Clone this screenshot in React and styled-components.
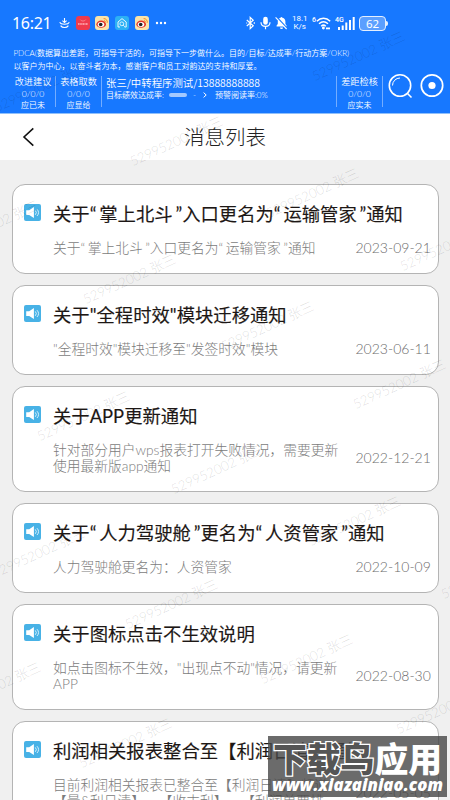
import React from "react";
import styled, { createGlobalStyle } from "styled-components";

const GlobalStyle = createGlobalStyle`
    * {
        box-sizing: border-box;
    }

    html, body {
        margin: 0;
        overflow: hidden;
    }

    body {
        font-family: Lato, "Noto Sans CJK SC", sans-serif;
        text-spacing-trim: space-all;
    }
`

const Screen = styled.main`
    position: relative;
    width: 450px;
    height: 800px;
    overflow: hidden;
    background: #f0f0f0;
`

const Header = styled.header`
    height: 114px;
    padding-top: 11px;
    background: #1778ff;
    border-bottom: 1px solid #8fc0fb;
    color: #fff;
`

const StatusBar = styled.div`
    display: flex;
    justify-content: space-between;
    align-items: center;
    height: 24px;
    padding: 0 64px 0 12px;
`

const StatusGroup = styled.div`
    display: flex;
    align-items: center;
    gap: ${({ $gap }) => $gap}px;
`

const Clock = styled.span`
    width: 41px;
    font-family: "Noto Sans", sans-serif;
    font-size: 16px;
    letter-spacing: -0.3px;
    line-height: 24px;
    white-space: nowrap;
`

const Speed = styled.span`
    width: 16px;
    font-family: Roboto, sans-serif;
    font-size: 8px;
    line-height: 8.5px;
    text-align: center;
    white-space: nowrap;
`

const Battery = styled.span`
    position: relative;
    width: 27px;
    height: 15px;
    border: 1px solid #e4efff;
    border-radius: 4px;
    background: #5b9fff;
    font-family: "Noto Sans", sans-serif;
    font-size: 11.5px;
    line-height: 13px;
    text-align: center;

    &::after {
        content: "";
        position: absolute;
        top: 4px;
        right: -3px;
        width: 2px;
        height: 5px;
        border-radius: 0 2px 2px 0;
        background: #e4efff;
    }
`

const Slogan = styled.div`
    padding: 12px 0 0 13.5px;
    font-size: 8px;
    font-weight: 350;
    line-height: 13.3px;
    white-space: nowrap;
`

const Summary = styled.div`
    display: flex;
    height: 33px;
    margin-top: 2px;
    padding-left: 11px;
`

const Counter = styled.div`
    display: flex;
    flex-direction: column;
    align-items: center;
    width: ${({ $width }) => $width}px;
    height: 31px;
    border-right: 1px solid #74adff;
    border-left: ${({ $bordered }) => ($bordered ? "1px solid #74adff" : "none")};
    font-size: 8px;
    font-weight: 350;
    line-height: 9px;
    white-space: nowrap;
`

const CounterName = styled.span`
    font-size: 9.2px;
    line-height: 12px;
`

const CounterValue = styled.span`
    font-size: 8.6px;
    line-height: 13px;
`

const User = styled.div`
    width: 234px;
    padding-left: 4px;
    white-space: nowrap;
`

const UserName = styled.div`
    font-family: "Noto Sans CJK SC", sans-serif;
    font-size: 10.4px;
    font-weight: 350;
    line-height: 13px;
`

const Rates = styled.div`
    display: flex;
    align-items: center;
    font-size: 8px;
    font-weight: 350;
    line-height: 13px;
`

const Masked = styled.span`
    width: 18px;
    height: 4px;
    margin: 0 6px 0 5px;
    border-radius: 2px;
    background: #a3c9ff;
`

const Arrow = styled.svg`
    margin: 0 8px 0 7px;
`

const Tools = styled.div`
    display: flex;
    gap: 7px;
    margin-top: -3px;
    padding-left: 5px;
`

const TitleBar = styled.div`
    display: grid;
    grid-template-columns: 60px 1fr 60px;
    align-items: center;
    height: 46px;
    background: #fff;
`

const Back = styled.svg`
    margin-left: 22px;
`

const PageTitle = styled.h1`
    margin: 0;
    padding-top: 1px;
    font-size: 20.5px;
    font-weight: 300;
    line-height: 45px;
    text-align: center;
    color: #222;
`

const List = styled.section`
    display: flex;
    flex-direction: column;
    gap: 11px;
    padding: 24px 11.5px 0;
`

const Card = styled.article`
    display: grid;
    grid-template-columns: 40.5px 1fr;
    flex-shrink: 0;
    padding: 16px 7px 17px 0;
    border: 1px solid #b4b4b4;
    border-radius: 13px;
    background: #fff;
`

const Speaker = styled.svg`
    margin: 3px 0 0 11.5px;
`

const CardTitle = styled.h2`
    margin: 0 0 13px;
    font-size: 18.35px;
    font-weight: 400;
    line-height: 26px;
    color: #1d1715;
    -webkit-text-stroke: 0.15px #1d1715;
    white-space: nowrap;
`

const CardBody = styled.div`
    grid-column: 2;
    display: flex;
    justify-content: space-between;
    align-items: center;
    color: #7c7c7c;
`

const Description = styled.p`
    height: ${({ $lines }) => $lines * 16}px;
    margin: 0;
    font-size: 13.75px;
    font-weight: 300;
    line-height: 16px;
    white-space: pre;
`

const DateLabel = styled.time`
    flex-shrink: 0;
    width: 75px;
    font-size: 14px;
    font-weight: 300;
    line-height: 16px;
    color: #6c6c6c;
    white-space: nowrap;
`

const Quote = styled.span`
    display: inline-block;
    width: 0.52em;
    text-align: ${({ $side }) => $side};
`

const Mark = styled.span`
    position: absolute;
    left: ${({ $x }) => $x}px;
    top: ${({ $y }) => $y - 16}px;
    height: 16px;
    font-size: 13.4px;
    font-weight: 300;
    line-height: 16px;
    color: rgba(0, 0, 0, 0.14);
    transform: rotate(-24.5deg);
    transform-origin: 0 100%;
    white-space: nowrap;
    pointer-events: none;
`

const Stamp = styled.aside`
    position: absolute;
    left: 268px;
    top: 736px;
    display: flex;
    flex-direction: column;
    align-items: center;
    width: 179px;
    height: 61px;
    background: rgba(70, 70, 70, 0.8);
    color: #fff;
    white-space: nowrap;
`

const StampName = styled.div`
    height: 38px;
    margin-top: 3px;
    font-size: 33.8px;
    font-weight: 900;
    line-height: 40px;
`

const Outlined = styled.span`
    color: #555;
    paint-order: stroke fill;
    -webkit-text-stroke: 2.6px #fff;
`

const StampUrl = styled.div`
    font-family: "Open Sans", sans-serif;
    font-size: 16.8px;
    font-style: italic;
    font-weight: 800;
    line-height: 16px;
`

const messages = [
    { title: "关于“掌上北斗”入口更名为“运输管家”通知", text: "关于“掌上北斗”入口更名为“运输管家”通知", date: "2023-09-21" },
    { title: "关于\"全程时效\"模块迁移通知", text: "\"全程时效\"模块迁移至\"发签时效\"模块", date: "2023-06-11" },
    { title: "关于APP更新通知", text: "针对部分用户wps报表打开失败情况，需要更新\n使用最新版app通知", date: "2022-12-21" },
    { title: "关于“人力驾驶舱”更名为“人资管家”通知", text: "人力驾驶舱更名为：人资管家", date: "2022-10-09" },
    { title: "关于图标点击不生效说明", text: "如点击图标不生效，\"出现点不动\"情况，请更新\nAPP", date: "2022-08-30" },
    { title: "利润相关报表整合至【利润日清】通知", text: "目前利润相关报表已整合至【利润日清】频道\n【量&利日清】、【收支利】、【利润单票排", date: "2022-05-05" },
];

const marks = [
    [-2, 115], [316, 84], [134, 169], [270, 221], [-50, 253], [87, 307], [404, 274],
    [225, 354], [357, 412], [41, 444], [175, 497], [312, 549], [-4, 581], [129, 632],
    [-48, 715], [445, 602], [264, 687], [400, 737], [83, 771],
];

const withQuotes = (text) =>
    text.split(/([“”])/).map((part, i) => {
        if (part === "“") return <Quote key={i} $side="left">{part}</Quote>;
        if (part === "”") return <Quote key={i} $side="right">{part}</Quote>;
        return part;
    });

const WeiboIcon = () => (
    <svg width="14" height="14" viewBox="0 0 14 14">
        <rect width="14" height="14" rx="3" fill="#fbe3a8" />
        <ellipse cx="6.2" cy="8.2" rx="4.8" ry="3.6" fill="#e0342b" />
        <ellipse cx="6" cy="8.4" rx="3.3" ry="2.5" fill="#fff" />
        <circle cx="5.7" cy="8.5" r="1.8" fill="#222" />
        <path d="M8.6 2.6a3.4 3.4 0 0 1 3.6 4.2M8.9 4.6a1.5 1.5 0 0 1 1.4 1.8" fill="none" stroke="#f08a24" strokeWidth="1" />
    </svg>
);

const SpeakerIcon = () => (
    <Speaker width="17" height="17" viewBox="0 0 17 17">
        <rect width="17" height="17" rx="2" fill="#48b2e6" />
        <path d="M2.2 6.2h3L9.9 3v11L5.2 11h-3z" fill="#fff" />
        <path d="M11.3 6.4a3.2 3.2 0 0 1 0 4.4M13 5.2a5 5 0 0 1 0 6.8" fill="none" stroke="#e2f5ff" strokeWidth="0.9" />
    </Speaker>
);

const StatusIcons = () => (
    <StatusBar>
        <StatusGroup $gap={5.8}>
            <Clock>16:21</Clock>
            <svg width="11" height="12" viewBox="0 0 11 12" fill="none" stroke="#fff" strokeWidth="1.1">
                <path d="M5.5 1v4.4M3.4 3.6l2.1 2 2.1-2M.8 5.2C1.6 8 9.4 8 10.2 5.2M1.6 8.6c1.8 2.6 6 2.6 7.8 0" />
            </svg>
            <svg width="14" height="14" viewBox="0 0 14 14">
                <rect width="14" height="14" rx="3" fill="#ef3b4d" />
                <path d="M4.3 3.6c1 2 4.4 2 5.4 0" fill="none" stroke="#ff9ba4" strokeWidth="0.7" />
                <path d="M2 8.1h10" stroke="#ffb3b8" strokeWidth="1.5" strokeDasharray="1.2 .4" />
            </svg>
            <WeiboIcon />
            <svg width="14" height="14" viewBox="0 0 14 14">
                <rect width="14" height="14" rx="3" fill="#2cb1f4" />
                <path d="M3 11V6l4-3.4L11.2 6v5H9.6M3 11h2" fill="none" stroke="#fff" strokeWidth="0.9" />
                <circle cx="6.8" cy="7.8" r="1.9" fill="none" stroke="#fff" strokeWidth="0.8" />
                <path d="M8.2 9.2l1.6 1.6" stroke="#fff" strokeWidth="0.8" />
            </svg>
            <WeiboIcon />
            <svg width="12" height="4" viewBox="0 0 12 4" fill="#fff">
                <circle cx="2" cy="2" r="1.2" />
                <circle cx="6" cy="2" r="1.2" />
                <circle cx="10" cy="2" r="1.2" />
            </svg>
        </StatusGroup>
        <StatusGroup $gap={4.1}>
            <svg width="9" height="14" viewBox="0 0 9 14" fill="none" stroke="#fff" strokeWidth="1.2">
                <path d="M.8 4l6.4 5.8L4.2 12.6V1.4l3 2.8L.8 10" />
                <path d="M8.3 6.2v1.6M.2 7h1" />
            </svg>
            <svg width="11" height="14" viewBox="0 0 11 14">
                <rect x="3.2" y="0.8" width="4.6" height="8" rx="2.3" fill="#fff" />
                <path d="M1 6.2c0 5.6 9 5.6 9 0M5.5 10.4v2.8" fill="none" stroke="#fff" strokeWidth="1.2" />
            </svg>
            <svg width="13" height="14" viewBox="0 0 13 14">
                <path d="M1.6 10.5V9.4L2.8 8V5.6C3 2.6 4.6 2 5.6 1.7c.2-1 1.6-1 1.8 0C9.6 2.2 10.4 4 10.4 5.8V8l1.2 1.4v1.1z" fill="#fff" />
                <path d="M5 11.4h3a1.5 1.5 0 0 1-3 0z" fill="#fff" />
                <path d="M1.6 1l11 12" stroke="#1778ff" strokeWidth="1.6" />
                <path d="M.6 1.4l11 11.6" stroke="#fff" strokeWidth="1.1" />
            </svg>
            <Speed>18.1<br />K/s</Speed>
            <svg width="19" height="16" viewBox="0 0 19 16" fill="none" stroke="#fff" strokeWidth="1.5">
                <text x="0" y="6.5" fontSize="7" fontFamily="Roboto" fontWeight="500" fill="#fff" stroke="none">6</text>
                <path d="M4.8 6.2c4-3.8 9.4-3.8 13.4 0M7 8.8c2.8-2.6 6.2-2.6 9 0M9.2 11.2c1.4-1.3 3.2-1.3 4.6 0" />
                <circle cx="11.4" cy="13" r="0.7" fill="#fff" />
                <path d="M14 13.4h4" strokeWidth="1.8" />
            </svg>
            <svg width="20" height="15" viewBox="0 0 20 15" fill="#fff">
                <text x="0" y="6.4" fontSize="7" fontFamily="Roboto" fontWeight="500">4G</text>
                <path d="M3 11h2v3H3zM6.7 9.5h2V14h-2zM10.3 6.5h2V14h-2zM14 4h2v10h-2zM17.7 1h2v13h-2z" />
            </svg>
            <Battery>62</Battery>
        </StatusGroup>
    </StatusBar>
);

const Notice = ({ title, text, date }) => (
    <Card>
        <SpeakerIcon />
        <CardTitle>{withQuotes(title)}</CardTitle>
        <CardBody>
            <Description $lines={text.split("\n").length}>{withQuotes(text)}</Description>
            <DateLabel>{date}</DateLabel>
        </CardBody>
    </Card>
);

const Stat = ({ name, note, width, bordered }) => (
    <Counter $width={width} $bordered={bordered}>
        <CounterName>{name}</CounterName>
        <CounterValue>0/0/0</CounterValue>
        <span>{note}</span>
    </Counter>
);

const App = () => {
    return (
        <Screen>
            <GlobalStyle />
            <Header>
                <StatusIcons />
                <Slogan>
                    PDCA(数据算出差距，可指导干活的，可指导下一步做什么。目的/目标/达成率/行动方案/OKR)
                    <br />
                    以客户为中心，以奋斗者为本，感谢客户和员工对韵达的支持和厚爱。
                </Slogan>
                <Summary>
                    <Stat name="改进建议" note="应已未" width={45} />
                    <Stat name="表格取数" note="应显给" width={46} />
                    <User>
                        <UserName>张三/中转程序测试/13888888888</UserName>
                        <Rates>
                            目标绩效达成率:<Masked />-
                            <Arrow width="4" height="6" viewBox="0 0 4 6" fill="none" stroke="#fff">
                                <path d="M.6.6L3.2 3 .6 5.4" />
                            </Arrow>
                            预警阅读率:0%
                        </Rates>
                    </User>
                    <Stat name="差距检核" note="应实未" width={47} bordered />
                    <Tools>
                        <svg width="25" height="26" viewBox="0 0 25 26" fill="none" stroke="#fff" strokeWidth="1.6">
                            <circle cx="12" cy="12.5" r="10.7" />
                            <path d="M4.5 12.5A7.5 7.5 0 0 1 12 5" strokeWidth="1" />
                            <path d="M19.5 20.5l4 4" />
                        </svg>
                        <svg width="24" height="26" viewBox="0 0 24 26">
                            <circle cx="12" cy="12.5" r="10.7" fill="none" stroke="#fff" strokeWidth="1.7" />
                            <circle cx="12" cy="12.5" r="3.6" fill="#fff" />
                        </svg>
                    </Tools>
                </Summary>
            </Header>
            <TitleBar>
                <Back width="13" height="20" viewBox="0 0 13 20" fill="none" stroke="#111" strokeWidth="1.6">
                    <path d="M11.3 1.3L2 10l9.3 8.7" />
                </Back>
                <PageTitle>消息列表</PageTitle>
            </TitleBar>
            <List>
                {messages.map((message) => (
                    <Notice key={message.date} {...message} />
                ))}
            </List>
            {marks.map(([x, y]) => (
                <Mark key={`${x}-${y}`} $x={x} $y={y}>529952002 张三</Mark>
            ))}
            <Stamp>
                <StampName><Outlined>下载鸟</Outlined>应用</StampName>
                <StampUrl>www.xiazainiao.com</StampUrl>
            </Stamp>
        </Screen>
    );
};

export default App;
